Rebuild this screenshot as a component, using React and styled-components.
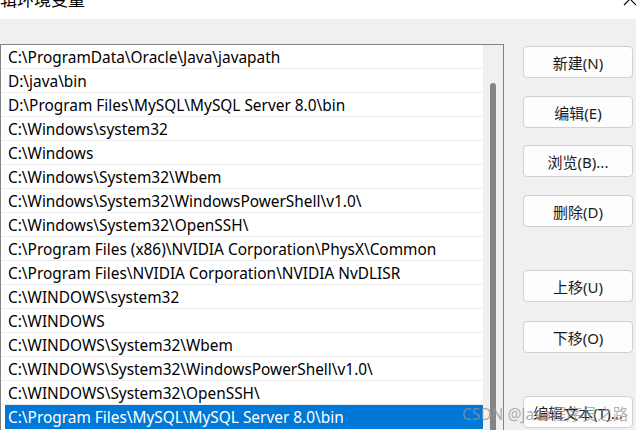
import styled, { createGlobalStyle } from 'styled-components';

const GlobalStyle = createGlobalStyle`
	html, body {
		margin: 0;
		padding: 0;
		background: #f0f0f0;
		overflow: hidden;
	}
	body {
		font-family: "Noto Sans", "Noto Sans CJK SC", sans-serif;
		color: #000;
	}
`;

const Window = styled.div`
	width: 636px;
	height: 430px;
	overflow: hidden;
	display: flex;
	flex-direction: column;
`;

const TitleBar = styled.div`
	height: 19px;
	flex: none;
	background: #fff;
	display: flex;
	justify-content: space-between;
	overflow: hidden;
`;

const Title = styled.div`
	margin-top: -13px;
	font-family: "Noto Sans CJK SC", sans-serif;
	font-size: 17px;
	line-height: 24px;
	color: #000;
`;

const CloseIcon = styled.svg`
	margin-top: -8px;
	margin-right: -1px;
	width: 14px;
	height: 14px;
`;

const Body = styled.div`
	display: flex;
	padding-top: 25px;
	flex: 1;
	min-height: 0;
`;

const ListBox = styled.div`
	width: 502px;
	flex: none;
	border: 1px solid #838383;
	border-bottom: none;
	background: #fff;
	display: flex;
`;

const Rows = styled.div`
	flex: 1;
	display: flex;
	flex-direction: column;
`;

const Row = styled.div`
	box-sizing: border-box;
	height: 24px;
	padding-top: 2px;
	flex: none;
	border-bottom: 1px solid #ececec;
	display: flex;
	align-items: center;
	font-size: 15.4px;
	white-space: nowrap;
	padding-left: ${(p) => (p.$selected ? '3px' : '7px')};
	margin-left: ${(p) => (p.$selected ? '4px' : '0')};
	background: ${(p) => (p.$selected ? '#0078d7' : 'transparent')};
	color: ${(p) => (p.$selected ? '#fff' : '#000')};
	border-color: ${(p) => (p.$selected ? '#0078d7' : '#ececec')};
`;

const ScrollTrack = styled.div`
	width: 20px;
	flex: none;
	background: #f0f0f0;
	display: flex;
	justify-content: center;
	padding-top: 38px;
`;

const ScrollThumb = styled.div`
	width: 6px;
	height: 400px;
	background: #858585;
	border-radius: 3px 3px 0 0;
`;

const Buttons = styled.div`
	display: flex;
	flex-direction: column;
	padding-left: 19px;
`;

const Button = styled.button`
	width: 110px;
	height: 32px;
	margin-top: ${(p) => p.$gap}px;
	flex: none;
	background: #fdfdfd;
	border: 1px solid #d0d0d0;
	border-radius: 4px;
	font-family: "Noto Sans", "Noto Sans CJK SC", sans-serif;
	font-size: 15px;
	color: #1b1b1b;
	padding: 0;
`;

const WatermarkHolder = styled.div`
	position: relative;
	height: 0;
`;

const Watermark = styled.span`
	position: absolute;
	left: 462px;
	bottom: 5px;
	font-family: "Noto Sans", "Noto Sans CJK SC", sans-serif;
	font-size: 15.5px;
	white-space: nowrap;
	color: rgba(150, 150, 150, 0.75);
	pointer-events: none;
`;

const paths = [
	'C:\\ProgramData\\Oracle\\Java\\javapath',
	'D:\\java\\bin',
	'D:\\Program Files\\MySQL\\MySQL Server 8.0\\bin',
	'C:\\Windows\\system32',
	'C:\\Windows',
	'C:\\Windows\\System32\\Wbem',
	'C:\\Windows\\System32\\WindowsPowerShell\\v1.0\\',
	'C:\\Windows\\System32\\OpenSSH\\',
	'C:\\Program Files (x86)\\NVIDIA Corporation\\PhysX\\Common',
	'C:\\Program Files\\NVIDIA Corporation\\NVIDIA NvDLISR',
	'C:\\WINDOWS\\system32',
	'C:\\WINDOWS',
	'C:\\WINDOWS\\System32\\Wbem',
	'C:\\WINDOWS\\System32\\WindowsPowerShell\\v1.0\\',
	'C:\\WINDOWS\\System32\\OpenSSH\\',
	'C:\\Program Files\\MySQL\\MySQL Server 8.0\\bin',
];

const buttons = [
	{ label: '新建(N)', gap: 2 },
	{ label: '编辑(E)', gap: 18 },
	{ label: '浏览(B)...', gap: 17 },
	{ label: '删除(D)', gap: 18 },
	{ label: '上移(U)', gap: 43 },
	{ label: '下移(O)', gap: 19 },
	{ label: '编辑文本(T)...', gap: 43 },
];

export default function App() {
	return (
		<Window>
			<GlobalStyle />
			<TitleBar>
				<Title>辑环境变量</Title>
				<CloseIcon viewBox="0 0 14 14">
					<path d="M1 1 L13 13 M13 1 L1 13" stroke="#000" strokeWidth="1.1" fill="none" />
				</CloseIcon>
			</TitleBar>
			<Body>
				<ListBox>
					<Rows>
						{paths.map((p, i) => (
							<Row key={i} $selected={i === paths.length - 1}>
								{p}
							</Row>
						))}
					</Rows>
					<ScrollTrack>
						<ScrollThumb />
					</ScrollTrack>
				</ListBox>
				<Buttons>
					{buttons.map((b) => (
						<Button key={b.label} $gap={b.gap}>
							{b.label}
						</Button>
					))}
				</Buttons>
			</Body>
			<WatermarkHolder>
				<Watermark>CSDN @Java程序员之路</Watermark>
			</WatermarkHolder>
		</Window>
	);
}
